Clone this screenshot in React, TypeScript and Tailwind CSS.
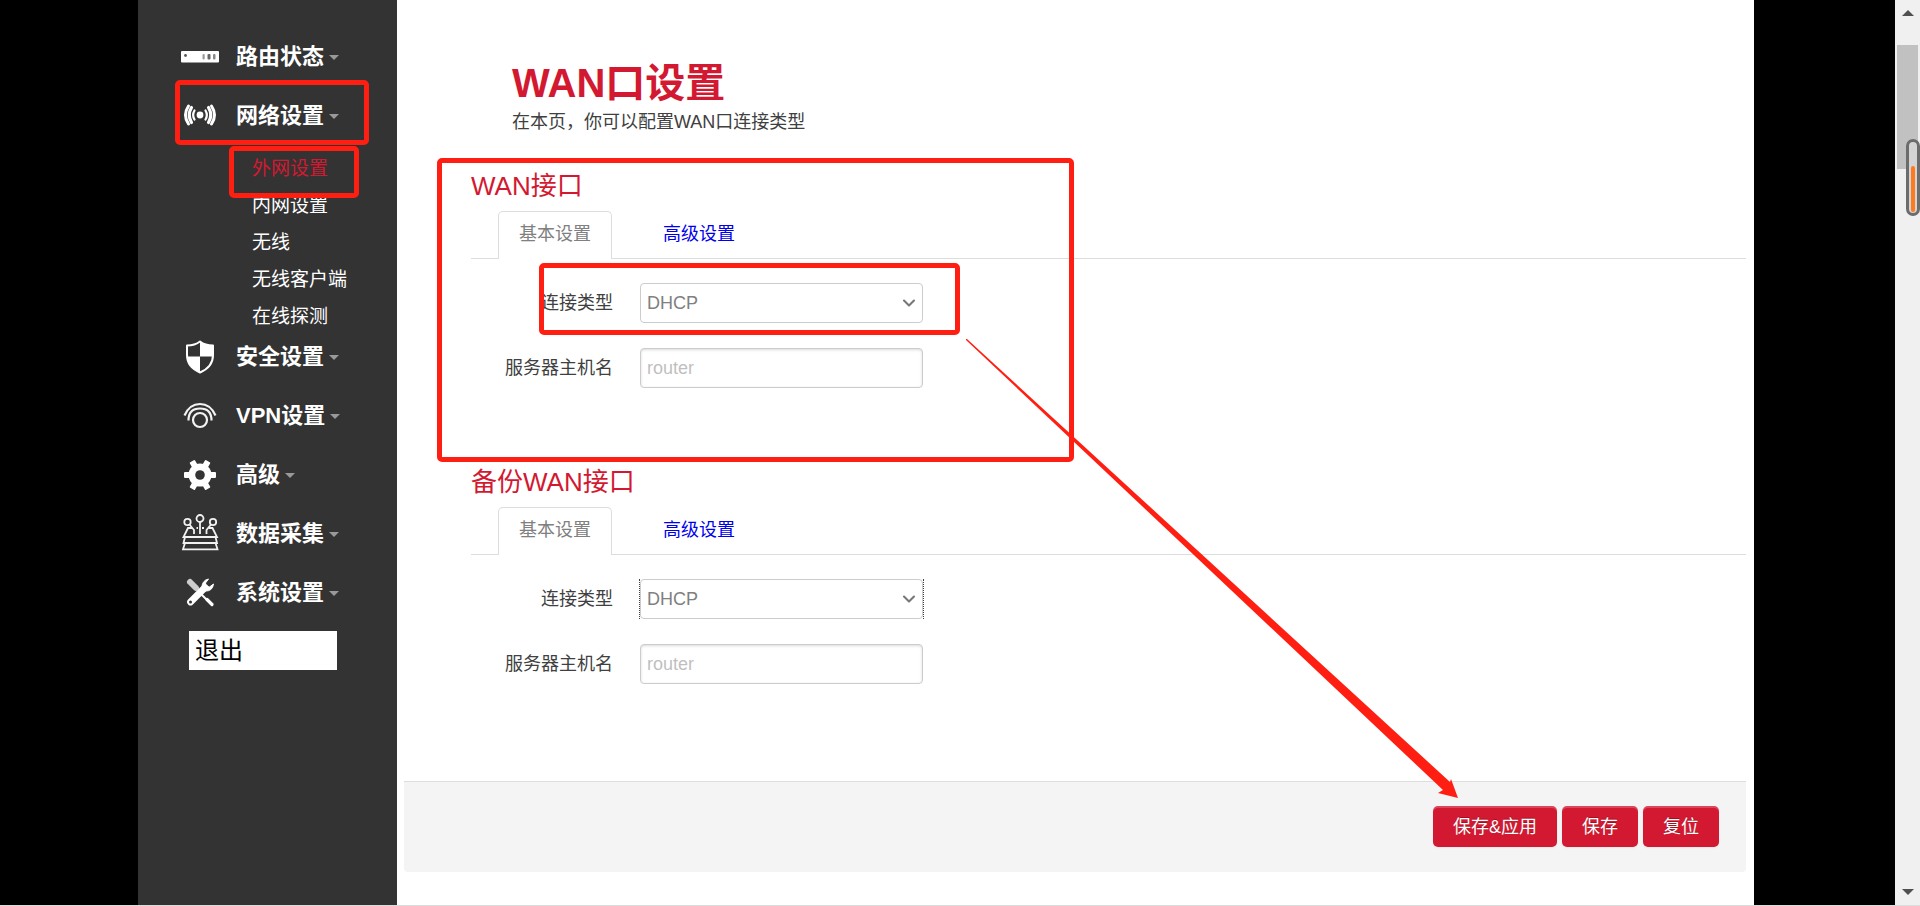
import React, { useState } from "react";
import { ChevronDown } from "lucide-react";

interface MenuItem {
  label: string;
  icon: React.ReactNode;
  children?: string[];
}

const RouterIcon = () => (
  <svg width="40" height="40" viewBox="0 0 40 40">
    <rect x="1" y="14" width="38" height="11.5" rx="1" fill="#fff" />
    <circle cx="5.5" cy="18.5" r="1.4" fill="#555" />
    <rect x="22.5" y="17" width="2.2" height="5.5" rx="1" fill="#999" />
    <rect x="27.5" y="17" width="3" height="5.5" rx="1" fill="#666" />
    <rect x="33" y="17" width="2.5" height="5.5" rx="1" fill="#888" />
  </svg>
);

const SignalIcon = () => (
  <svg width="40" height="40" viewBox="0 0 40 40" fill="none" stroke="#fff" strokeLinecap="round">
    <circle cx="20" cy="19" r="3.4" fill="#fff" stroke="none" />
    <path d="M14.5 14.5Q11.8 19 14.5 23.5M25.5 14.5Q28.2 19 25.5 23.5" strokeWidth="2.2" />
    <path d="M11.5 11.5Q7 19 11.5 26.5M28.5 11.5Q33 19 28.5 26.5" strokeWidth="3.2" />
    <path d="M8.5 10Q2.5 19 8.5 28M31.5 10Q37.5 19 31.5 28" strokeWidth="3" />
  </svg>
);

const ShieldIcon = () => (
  <svg width="40" height="40" viewBox="0 0 40 40">
    <path
      d="M20 4.5Q25 8.5 33 8.5V18Q33 30 20 35.5Q7 30 7 18V8.5Q15 8.5 20 4.5Z"
      fill="none"
      stroke="#fff"
      strokeWidth="2"
      strokeLinejoin="round"
    />
    <path d="M20 4.5Q25 8.5 33 8.5V19.5H20ZM20 19.5V35.5Q8 30 7 19.5Z" fill="#fff" />
  </svg>
);

const VpnIcon = () => (
  <svg width="40" height="40" viewBox="0 0 40 40" fill="none" stroke="#f2f2f2" strokeWidth="2.2">
    <circle cx="20" cy="24" r="7" />
    <path d="M8.5 24.5Q8.5 12.5 20 12.5T31.5 24.5" />
    <path d="M4.5 19.5Q9.5 8 20 8T35.5 19.5" />
  </svg>
);

const GearIcon = () => (
  <svg width="40" height="40" viewBox="0 0 40 40">
    <g fill="#fff">
      <rect x="4" y="17" width="32" height="6" rx="1" />
      <rect x="4" y="17" width="32" height="6" rx="1" transform="rotate(60 20 20)" />
      <rect x="4" y="17" width="32" height="6" rx="1" transform="rotate(120 20 20)" />
      <circle cx="20" cy="20" r="11.5" />
    </g>
    <circle cx="20" cy="20" r="4.8" fill="#333" />
  </svg>
);

const CollectIcon = () => (
  <svg width="40" height="40" viewBox="0 0 40 40" fill="none" stroke="#f2f2f2" strokeWidth="1.8">
    <circle cx="20" cy="4.5" r="3.5" />
    <circle cx="7.5" cy="8" r="3.2" />
    <circle cx="33" cy="8" r="3.2" />
    <path d="M20 8V20M9.5 10.5L14 16V20M31 10.5L26.5 16V20" />
    <path d="M12 14H8L3.5 23H37L32.5 14H28.5M16.5 14H18M22 14H24" />
    <path d="M5 23L3.5 29H37L35.5 23M5 29L3 35.3H37.5L35.5 29" />
  </svg>
);

const ToolsIcon = () => (
  <svg width="40" height="40" viewBox="0 0 40 40" fill="none" stroke="#fff">
    <path d="M10 9L16 15" stroke="#ccc" strokeWidth="6" strokeLinecap="round" />
    <path d="M21 21L28 28" strokeWidth="2" />
    <path d="M27 26.5L32 31.5" strokeWidth="3.2" strokeLinecap="round" />
    <path d="M10.5 29L25 14.5" strokeWidth="6.8" strokeLinecap="round" />
    <path
      d="M28.5 6Q21.5 7.5 22 15.5L25 18Q32.500 18.5 33.5 11L29.5 14L26 13L25.5 10Z"
      fill="#fff"
      strokeWidth="1"
      strokeLinejoin="round"
    />
    <circle cx="10.5" cy="29" r="1.5" fill="#333" stroke="none" />
  </svg>
);

const menu: MenuItem[] = [
  { label: "路由状态", icon: <RouterIcon /> },
  {
    label: "网络设置",
    icon: <SignalIcon />,
    children: ["外网设置", "内网设置", "无线", "无线客户端", "在线探测"],
  },
  { label: "安全设置", icon: <ShieldIcon /> },
  { label: "VPN设置", icon: <VpnIcon /> },
  { label: "高级", icon: <GearIcon /> },
  { label: "数据采集", icon: <CollectIcon /> },
  { label: "系统设置", icon: <ToolsIcon /> },
];

// Red frame laid over the control it points out
const Marker = ({ className }: { className: string }) => (
  <span
    className={`absolute z-10 pointer-events-none rounded-[5px] border-5 border-[#ff1f12] ${className}`}
  />
);

const Sidebar = () => {
  const [active, setActive] = useState("外网设置");

  return (
    <nav className="w-[259px] shrink-0 bg-[#333] pt-[27px] text-white">
      <ul>
        {menu.map((item) => (
          <li key={item.label}>
            <div className="relative">
              <a href="#" className="flex h-[59px] items-center gap-4 pl-[42px]">
                {item.icon}
                <span className="flex items-center gap-[5px] text-[22px] leading-7 font-bold">
                  {item.label}
                  <span className="mt-0.5 border-x-5 border-t-5 border-x-transparent border-t-[#999]" />
                </span>
              </a>
              {item.children && <Marker className="-top-1.5 right-7 bottom-0 left-[37px]" />}
            </div>
            {item.children && (
              <ul className="-mb-[9px] pt-1.5">
                {item.children.map((child) => (
                  <li key={child} className="relative">
                    <a
                      href="#"
                      onClick={() => setActive(child)}
                      className={`flex h-[37px] items-center pl-[114px] text-[19px] ${
                        child === active ? "text-[#d31931]" : "text-white"
                      }`}
                    >
                      {child}
                    </a>
                    {child === active && (
                      <Marker className="-top-[5px] right-[38px] -bottom-2.5 left-[91px]" />
                    )}
                  </li>
                ))}
              </ul>
            )}
          </li>
        ))}
      </ul>
      <button className="mt-[9px] ml-[51px] block h-[39px] w-[148px] bg-white px-1.5 text-left text-2xl text-black">
        退出
      </button>
    </nav>
  );
};

interface InterfaceSectionProps {
  id: string;
  title: string;
  marked?: boolean;
  focused?: boolean;
}

const InterfaceSection: React.FC<InterfaceSectionProps> = ({ id, title, marked, focused }) => {
  const [proto, setProto] = useState("DHCP");

  return (
    <section className="relative mr-2 ml-[74px] pb-[77px]">
      <h2 className="text-[26px] leading-[34px] text-[#d31931]">{title}</h2>
      <ul className="mt-2 flex border-b border-[#ddd] pl-[27px] text-lg">
        <li>
          <a
            href="#"
            className="-mb-px flex h-12 items-center rounded-t-[5px] border border-b-0 border-[#ddd] bg-white px-5 pb-[3px] text-[#808080]"
          >
            基本设置
          </a>
        </li>
        <li className="ml-[31px]">
          <a href="#" className="flex h-[47px] items-center px-5 pb-px text-[#0000ee]">
            高级设置
          </a>
        </li>
      </ul>
      <div className="flex flex-col gap-[25px] pt-6 text-lg">
        <div className="flex items-center gap-[27px]">
          <label htmlFor={`${id}-proto`} className="w-[142px] text-right text-[#404040]">
            连接类型
          </label>
          <div
            className={`relative -mx-px border-x border-dotted ${
              focused ? "border-[#404040]" : "border-transparent"
            }`}
          >
            <select
              id={`${id}-proto`}
              value={proto}
              onChange={(e) => setProto(e.target.value)}
              className="block h-10 w-[283px] appearance-none rounded-[4px] border border-[#ccc] bg-white px-1.5 text-[#808080]"
            >
              <option>DHCP</option>
            </select>
            <ChevronDown
              strokeWidth={2.5}
              className="pointer-events-none absolute top-2.5 right-1 h-5 w-5 text-[#777]"
            />
            {marked && <Marker className="-top-5 -right-[37px] -bottom-3 -left-[101px]" />}
          </div>
        </div>
        <div className="flex items-center gap-[27px]">
          <label htmlFor={`${id}-host`} className="w-[142px] text-right text-[#404040]">
            服务器主机名
          </label>
          <input
            id={`${id}-host`}
            type="text"
            placeholder="router"
            className="h-10 w-[283px] rounded-[4px] border border-[#ccc] px-1.5 shadow-[inset_0_1px_3px_rgba(0,0,0,0.15)] placeholder:text-[#bfbfbf]"
          />
        </div>
      </div>
      {marked && <Marker className="-top-[11px] bottom-[3px] -left-[34px] w-[637px]" />}
    </section>
  );
};

const actions = ["保存&应用", "保存", "复位"];

const ScrollRail = () => (
  <div className="relative flex w-[25px] shrink-0 flex-col items-center bg-[#f0f0f0]">
    <span className="mt-2.5 border-x-6 border-b-6 border-x-transparent border-b-[#505050]" />
    <span className="mt-[29px] h-[124px] w-[21px] bg-[#c1c1c1]" />
    <span className="mt-auto mb-2.5 border-x-6 border-t-6 border-x-transparent border-t-[#505050]" />
    <span className="absolute top-[139px] right-0 flex h-[77px] w-3.5 items-end justify-center rounded-full border-3 border-[#6c6c6c] bg-[#d4d4d4] pb-px">
      <span className="h-[46px] w-1 rounded-full bg-[#ff7a1f]" />
    </span>
  </div>
);

export default function App() {
  return (
    <div className="flex min-h-screen border-b border-[#dcdcdc] bg-black font-['Liberation_Sans','Noto_Sans_CJK_SC',sans-serif]">
      <div className="flex flex-1 pr-[141px] pl-[138px]">
        <Sidebar />
        <main className="relative flex-1 bg-white pt-[59px]">
          <header className="mb-[33px] pl-[115px]">
            <h1 className="text-[40px] leading-12 font-bold text-[#d31931]">WAN口设置</h1>
            <p className="mt-px text-lg text-[#404040]">在本页，你可以配置WAN口连接类型</p>
          </header>
          <InterfaceSection id="wan" title="WAN接口" marked />
          <InterfaceSection id="wan-backup" title="备份WAN接口" focused />
          <footer className="mt-5 mr-2 mb-8 ml-[7px] flex justify-end gap-[5px] rounded-b-[4px] border-t border-[#ddd] bg-[#f4f4f4] pt-6 pr-[27px] pb-[25px]">
            {actions.map((label) => (
              <button
                key={label}
                className="h-[41px] rounded-[5px] bg-[#d31931] px-5 text-lg text-white shadow-[inset_0_2px_0_rgba(255,255,255,0.2),0_1px_2px_rgba(0,0,0,0.05)] [text-shadow:0_-1px_0_rgba(0,0,0,0.25)]"
              >
                {label}
              </button>
            ))}
          </footer>
          <svg
            className="pointer-events-none absolute top-[339px] left-[569px] z-20"
            width="494"
            height="460"
            viewBox="0 0 494 460"
          >
            <path d="M0 0L1 0L484 443L485 440L492 459L472 454L477 451L0 1Z" fill="#ff1f12" />
          </svg>
        </main>
      </div>
      <ScrollRail />
    </div>
  );
}
